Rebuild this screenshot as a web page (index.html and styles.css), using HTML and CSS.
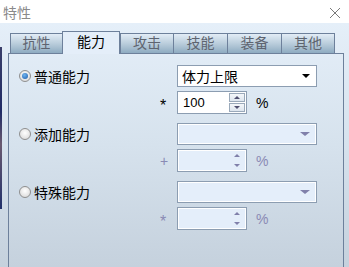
FILE: index.html
```html
<!DOCTYPE html>
<html lang="zh">
<head>
    <meta charset="UTF-8">
    <title>特性</title>
    <link rel="stylesheet" href="styles.css">
</head>
<body>
    <div class="titlebar">
        <span class="title">特性</span>
        <svg class="close" width="12" height="12" viewBox="0 0 12 12">
            <path d="M1 1 L11 11 M11 1 L1 11" stroke="#7a7a7a" stroke-width="1" fill="none"/>
        </svg>
    </div>

    <div class="main">
        <div class="tabs">
            <div class="tab w52">抗性</div>
            <div class="tab active">能力</div>
            <div class="tab w53">攻击</div>
            <div class="tab w54">技能</div>
            <div class="tab w54">装备</div>
            <div class="tab w53">其他</div>
        </div>

        <div class="panel">
            <div class="group">
                <label class="opt"><span class="radio checked"></span>普通能力</label>
                <span class="sym"></span>
                <div class="select">
                    <span>体力上限</span>
                    <span class="arrow"></span>
                </div>
                <span></span>
                <span class="sym star">*</span>
                <div class="spin-row">
                    <div class="spin">
                        <span>100</span>
                        <div class="spin-btns">
                            <span class="btn"><i class="up"></i></span>
                            <span class="btn"><i class="down"></i></span>
                        </div>
                    </div>
                    <span class="pct">%</span>
                </div>
            </div>

            <div class="group off">
                <label class="opt"><span class="radio"></span>添加能力</label>
                <span class="sym"></span>
                <div class="select">
                    <span></span>
                    <span class="arrow"></span>
                </div>
                <span></span>
                <span class="sym">+</span>
                <div class="spin-row">
                    <div class="spin">
                        <span></span>
                        <div class="spin-btns">
                            <span class="btn"><i class="up"></i></span>
                            <span class="btn"><i class="down"></i></span>
                        </div>
                    </div>
                    <span class="pct">%</span>
                </div>
            </div>

            <div class="group off">
                <label class="opt"><span class="radio"></span>特殊能力</label>
                <span class="sym"></span>
                <div class="select">
                    <span></span>
                    <span class="arrow"></span>
                </div>
                <span></span>
                <span class="sym star">*</span>
                <div class="spin-row">
                    <div class="spin">
                        <span></span>
                        <div class="spin-btns">
                            <span class="btn"><i class="up"></i></span>
                            <span class="btn"><i class="down"></i></span>
                        </div>
                    </div>
                    <span class="pct">%</span>
                </div>
            </div>
        </div>
    </div>
</body>
</html>
```

FILE: styles.css
```css
body {
    margin: 0;
    width: 349px;
    height: 267px;
    overflow: hidden;
    font-family: "Liberation Sans", "Noto Sans CJK SC", sans-serif;
    font-size: 13px;
    display: flex;
    flex-direction: column;
    background: #fff;
}
.titlebar {
    height: 23px;
    background: #fff;
    display: flex;
    justify-content: space-between;
    align-items: center;
    padding: 0 8px 0 3px;
}
.title {
    color: #8a8a8a;
    font-size: 14px;
}
.close {
    margin-top: 2px;
}
.main {
    flex: 1;
    position: relative;
    background: linear-gradient(#e5eff9, #d6e2ed 50%, #c5d1dd);
    padding: 8px 5px 0 8px;
    display: flex;
    flex-direction: column;
}
.main::before {
    content: '';
    position: absolute;
    left: 0;
    top: 24px;
    width: 2px;
    height: 162px;
    background: linear-gradient(#3a3f6a, #1f2b66 40%, #6a5a70 60%, #20306a);
}
.tabs {
    display: flex;
    align-items: flex-end;
    height: 22px;
    padding-left: 2px;
    position: relative;
    z-index: 1;
}
.tab {
    box-sizing: border-box;
    height: 20px;
    border: 1px solid #6d809b;
    border-bottom: none;
    margin-left: -1px;
    background: linear-gradient(#e2ecf6, #b6cad9 55%, #8eabc1);
    color: #5e6470;
    text-align: center;
    line-height: 19px;
    font-size: 14px;
}
.tab:first-child {
    margin-left: 0;
}
.w52 { width: 53px; }
.w53 { width: 54px; }
.w54 { width: 55px; }
.tab.active {
    width: 58px;
    height: 23px;
    margin-bottom: -1px;
    background: #e4eef9;
    color: #000;
    line-height: 21px;
}
.tab.active + .tab {
    margin-left: 0;
}
.panel {
    flex: 1;
    border: 1px solid #6d809b;
    border-bottom: none;
    padding: 11px 0 0 10px;
}
.group {
    display: grid;
    grid-template-columns: 140px 18px auto;
    grid-template-rows: 22px 23px;
    row-gap: 4px;
    align-items: center;
    margin-bottom: 9px;
}
.opt {
    display: flex;
    align-items: center;
    font-size: 14px;
    color: #000;
}
.radio {
    box-sizing: border-box;
    width: 12px;
    height: 12px;
    border-radius: 50%;
    border: 1px solid #8f8f8f;
    background: radial-gradient(circle at 50% 40%, #fff, #d4d4d4);
    margin-right: 3px;
    position: relative;
}
.radio.checked::after {
    content: '';
    position: absolute;
    left: 2px;
    top: 2px;
    width: 6px;
    height: 6px;
    border-radius: 50%;
    background: radial-gradient(circle at 40% 35%, #6fb4f0, #1c5aa8);
}
.sym {
    font-size: 14px;
    color: #000;
    padding-left: 1px;
}
.star {
    font-size: 16px;
    padding-top: 7px;
}
.off .sym,
.off .pct {
    color: #8a8ab4;
}
.select {
    box-sizing: border-box;
    width: 140px;
    height: 22px;
    border: 1px solid #8c9db1;
    background: #fff;
    display: flex;
    justify-content: space-between;
    align-items: center;
    padding: 0 6px 0 4px;
    font-size: 14px;
}
.off .select {
    background: #e4eefa;
    box-shadow: inset 0 0 0 1px #fff;
}
.arrow {
    width: 0;
    height: 0;
    border-left: 4px solid transparent;
    border-right: 4px solid transparent;
    border-top: 4px solid #000;
}
.off .arrow {
    border-left-width: 5px;
    border-right-width: 5px;
    border-top-color: #8080aa;
}
.spin-row {
    display: flex;
    align-items: center;
}
.spin {
    box-sizing: border-box;
    width: 70px;
    height: 23px;
    border: 1px solid #8c9db1;
    background: #fff;
    display: flex;
    justify-content: space-between;
    align-items: center;
    padding: 0 1px 0 5px;
}
.off .spin {
    background: #e4eefa;
    box-shadow: inset 0 0 0 1px #fff;
}
.spin-btns {
    display: flex;
    flex-direction: column;
    gap: 1px;
}
.btn {
    box-sizing: border-box;
    width: 16px;
    height: 9px;
    border: 1px solid #9aa9ba;
    background: linear-gradient(#f4f7fa, #dde5ee);
    display: flex;
    justify-content: center;
    align-items: center;
}
.off .btn {
    border-color: transparent;
    background: none;
}
.up, .down {
    width: 0;
    height: 0;
    border-left: 3px solid transparent;
    border-right: 3px solid transparent;
}
.up { border-bottom: 3px solid #505070; }
.down { border-top: 3px solid #505070; }
.off .up { border-bottom-color: #8080aa; }
.off .down { border-top-color: #8080aa; }
.pct {
    margin-left: 9px;
    font-size: 14px;
    color: #000;
}
```
